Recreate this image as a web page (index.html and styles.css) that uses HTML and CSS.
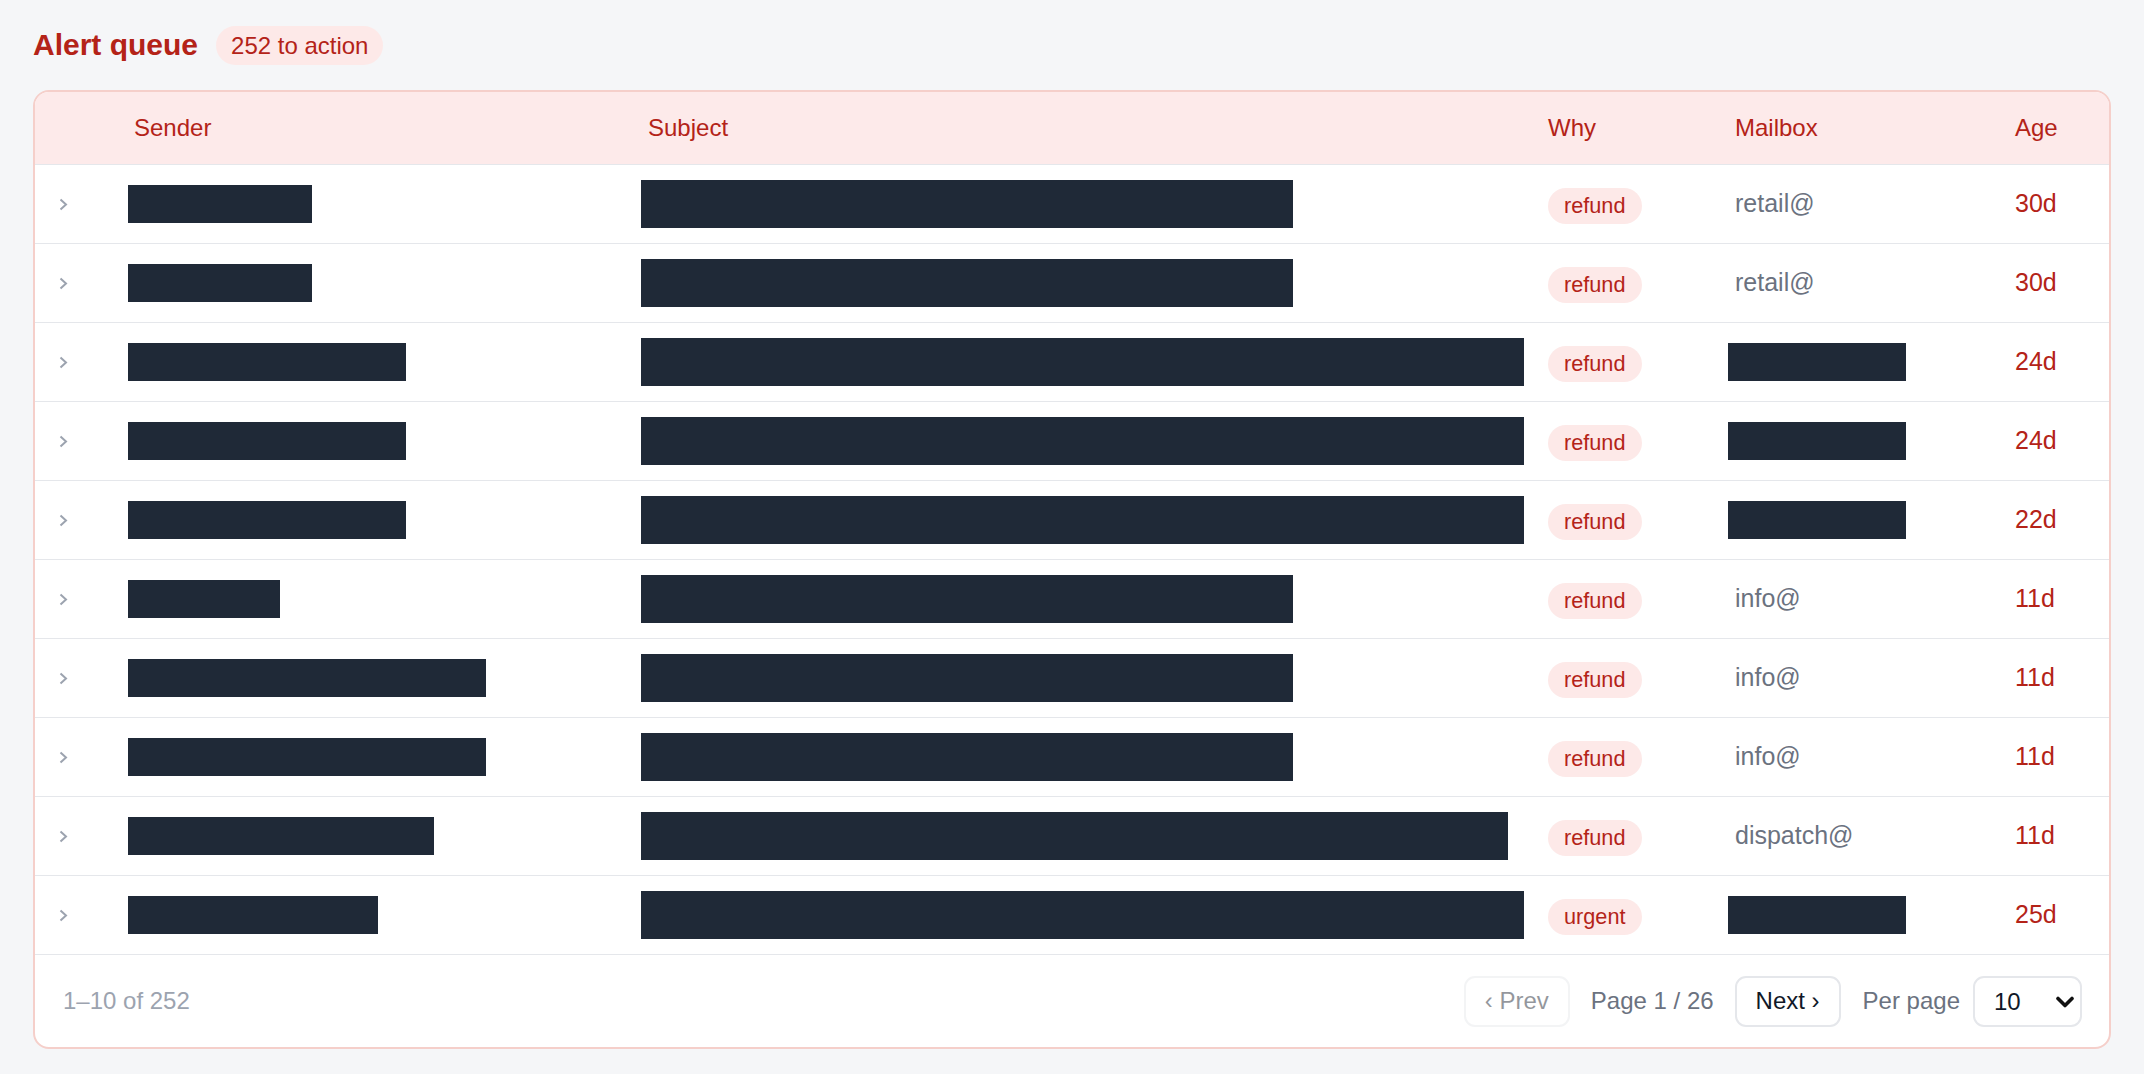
FILE: index.html
```html
<!DOCTYPE html>
<html lang="en">
<head>
<meta charset="utf-8">
<title>Alert queue</title>
<link rel="stylesheet" href="styles.css">
</head>
<body>
<div class="page">
  <div class="titlebar">
    <h1 class="title">Alert queue</h1>
    <span class="count-badge">252 to action</span>
  </div>

  <div class="card">
    <div class="row head">
      <div class="cell"></div>
      <div class="cell">Sender</div>
      <div class="cell">Subject</div>
      <div class="cell">Why</div>
      <div class="cell">Mailbox</div>
      <div class="cell">Age</div>
    </div>

    <div class="row">
      <div class="cell chev"><svg width="9" height="13" viewBox="0 0 9 13"><polyline points="1.5,1.5 7,6.5 1.5,11.5" fill="none" stroke="#9ca3af" stroke-width="2"/></svg></div>
      <div class="cell"><span class="bar bar-s" style="width:184px"></span></div>
      <div class="cell"><span class="bar bar-l" style="width:652px"></span></div>
      <div class="cell"><span class="pill">refund</span></div>
      <div class="cell mailbox">retail@</div>
      <div class="cell age">30d</div>
    </div>

    <div class="row">
      <div class="cell chev"><svg width="9" height="13" viewBox="0 0 9 13"><polyline points="1.5,1.5 7,6.5 1.5,11.5" fill="none" stroke="#9ca3af" stroke-width="2"/></svg></div>
      <div class="cell"><span class="bar bar-s" style="width:184px"></span></div>
      <div class="cell"><span class="bar bar-l" style="width:652px"></span></div>
      <div class="cell"><span class="pill">refund</span></div>
      <div class="cell mailbox">retail@</div>
      <div class="cell age">30d</div>
    </div>

    <div class="row">
      <div class="cell chev"><svg width="9" height="13" viewBox="0 0 9 13"><polyline points="1.5,1.5 7,6.5 1.5,11.5" fill="none" stroke="#9ca3af" stroke-width="2"/></svg></div>
      <div class="cell"><span class="bar bar-s" style="width:278px"></span></div>
      <div class="cell"><span class="bar bar-l" style="width:883px"></span></div>
      <div class="cell"><span class="pill">refund</span></div>
      <div class="cell"><span class="bar bar-m" style="width:178px"></span></div>
      <div class="cell age">24d</div>
    </div>

    <div class="row">
      <div class="cell chev"><svg width="9" height="13" viewBox="0 0 9 13"><polyline points="1.5,1.5 7,6.5 1.5,11.5" fill="none" stroke="#9ca3af" stroke-width="2"/></svg></div>
      <div class="cell"><span class="bar bar-s" style="width:278px"></span></div>
      <div class="cell"><span class="bar bar-l" style="width:883px"></span></div>
      <div class="cell"><span class="pill">refund</span></div>
      <div class="cell"><span class="bar bar-m" style="width:178px"></span></div>
      <div class="cell age">24d</div>
    </div>

    <div class="row">
      <div class="cell chev"><svg width="9" height="13" viewBox="0 0 9 13"><polyline points="1.5,1.5 7,6.5 1.5,11.5" fill="none" stroke="#9ca3af" stroke-width="2"/></svg></div>
      <div class="cell"><span class="bar bar-s" style="width:278px"></span></div>
      <div class="cell"><span class="bar bar-l" style="width:883px"></span></div>
      <div class="cell"><span class="pill">refund</span></div>
      <div class="cell"><span class="bar bar-m" style="width:178px"></span></div>
      <div class="cell age">22d</div>
    </div>

    <div class="row">
      <div class="cell chev"><svg width="9" height="13" viewBox="0 0 9 13"><polyline points="1.5,1.5 7,6.5 1.5,11.5" fill="none" stroke="#9ca3af" stroke-width="2"/></svg></div>
      <div class="cell"><span class="bar bar-s" style="width:152px"></span></div>
      <div class="cell"><span class="bar bar-l" style="width:652px"></span></div>
      <div class="cell"><span class="pill">refund</span></div>
      <div class="cell mailbox">info@</div>
      <div class="cell age">11d</div>
    </div>

    <div class="row">
      <div class="cell chev"><svg width="9" height="13" viewBox="0 0 9 13"><polyline points="1.5,1.5 7,6.5 1.5,11.5" fill="none" stroke="#9ca3af" stroke-width="2"/></svg></div>
      <div class="cell"><span class="bar bar-s" style="width:358px"></span></div>
      <div class="cell"><span class="bar bar-l" style="width:652px"></span></div>
      <div class="cell"><span class="pill">refund</span></div>
      <div class="cell mailbox">info@</div>
      <div class="cell age">11d</div>
    </div>

    <div class="row">
      <div class="cell chev"><svg width="9" height="13" viewBox="0 0 9 13"><polyline points="1.5,1.5 7,6.5 1.5,11.5" fill="none" stroke="#9ca3af" stroke-width="2"/></svg></div>
      <div class="cell"><span class="bar bar-s" style="width:358px"></span></div>
      <div class="cell"><span class="bar bar-l" style="width:652px"></span></div>
      <div class="cell"><span class="pill">refund</span></div>
      <div class="cell mailbox">info@</div>
      <div class="cell age">11d</div>
    </div>

    <div class="row">
      <div class="cell chev"><svg width="9" height="13" viewBox="0 0 9 13"><polyline points="1.5,1.5 7,6.5 1.5,11.5" fill="none" stroke="#9ca3af" stroke-width="2"/></svg></div>
      <div class="cell"><span class="bar bar-s" style="width:306px"></span></div>
      <div class="cell"><span class="bar bar-l" style="width:867px"></span></div>
      <div class="cell"><span class="pill">refund</span></div>
      <div class="cell mailbox">dispatch@</div>
      <div class="cell age">11d</div>
    </div>

    <div class="row">
      <div class="cell chev"><svg width="9" height="13" viewBox="0 0 9 13"><polyline points="1.5,1.5 7,6.5 1.5,11.5" fill="none" stroke="#9ca3af" stroke-width="2"/></svg></div>
      <div class="cell"><span class="bar bar-s" style="width:250px"></span></div>
      <div class="cell"><span class="bar bar-l" style="width:883px"></span></div>
      <div class="cell"><span class="pill">urgent</span></div>
      <div class="cell"><span class="bar bar-m" style="width:178px"></span></div>
      <div class="cell age">25d</div>
    </div>

    <div class="footer">
      <span class="range">1–10 of 252</span>
      <div class="pager">
        <button class="btn btn-disabled" type="button">‹ Prev</button>
        <span class="pageinfo">Page 1 / 26</span>
        <button class="btn" type="button">Next ›</button>
        <label class="perpage">
          <span>Per page</span>
          <span class="select-wrap">
            <select class="perpage-select">
              <option selected>10</option>
              <option>25</option>
              <option>50</option>
            </select>
            <svg class="select-arrow" width="18" height="12" viewBox="0 0 18 12"><polyline points="2,2.5 9,9.5 16,2.5" fill="none" stroke="#111111" stroke-width="3.6" stroke-linecap="round" stroke-linejoin="round"/></svg>
          </span>
        </label>
      </div>
    </div>
  </div>
</div>
</body>
</html>
```

FILE: styles.css
```css
* { box-sizing: border-box; }

html, body {
  margin: 0;
  padding: 0;
  background: #f5f6f8;
}

body {
  font-family: "Liberation Sans", Arial, sans-serif;
  color: #111827;
}

.page {
  padding: 26px 33px 20px;
}

.titlebar {
  display: flex;
  align-items: center;
  gap: 18px;
  height: 39px;
  margin-bottom: 25px;
}

.title {
  margin: 0;
  font-size: 30px;
  font-weight: 700;
  color: #b42318;
  line-height: 1;
  position: relative;
  top: -1px;
}

.count-badge {
  display: inline-block;
  height: 39px;
  line-height: 39px;
  padding: 0 15px;
  border-radius: 20px;
  background: #fde9e8;
  color: #b42318;
  font-size: 24px;
}

.card {
  background: #ffffff;
  border: 2px solid #f5cfca;
  border-radius: 16px;
  overflow: hidden;
}

.row {
  display: grid;
  grid-template-columns: 99px 514px 900px 187px 280px 1fr;
  align-items: center;
  height: 79px;
  border-bottom: 1px solid #e5e7eb;
}

.row.head {
  height: 73px;
  background: #fdeaea;
  color: #b42318;
  font-size: 24px;
}

.cell {
  min-width: 0;
  white-space: nowrap;
}

.chev {
  padding-left: 24px;
  display: flex;
  align-items: center;
}

.chev svg { display: block; }

.bar {
  display: block;
  background: #1f2937;
}

.bar-s {
  height: 38px;
  margin-left: -6px;
}

.bar-l {
  height: 48px;
  margin-left: -7px;
}

.bar-m {
  height: 38px;
  margin-left: -7px;
}

.pill {
  display: inline-block;
  height: 36px;
  line-height: 36px;
  padding: 0 16px;
  margin-top: 4px;
  border-radius: 18px;
  background: #fde9e8;
  color: #b42318;
  font-size: 21.7px;
}

.mailbox {
  font-size: 25px;
  color: #6b7280;
  margin-top: -2px;
}

.age {
  font-size: 25px;
  color: #b42318;
  margin-top: -2px;
}

.footer {
  display: flex;
  align-items: center;
  justify-content: space-between;
  height: 92px;
  padding: 0 27px 0 28px;
}

.range {
  font-size: 24px;
  color: #9ca3af;
}

.pager {
  display: flex;
  align-items: center;
  gap: 21px;
}

.btn {
  height: 51px;
  width: 106px;
  padding: 0;
  border: 2px solid #e5e7eb;
  border-radius: 11px;
  background: #ffffff;
  color: #111827;
  font-family: "Liberation Sans", Arial, sans-serif;
  font-size: 24px;
}

.btn-disabled {
  opacity: 0.45;
}

.pageinfo {
  font-size: 24px;
  color: #6b7280;
}

.perpage {
  display: flex;
  align-items: center;
  gap: 13px;
  font-size: 24px;
  color: #6b7280;
  margin-left: 1px;
}

.select-wrap {
  position: relative;
  display: block;
}

.perpage-select {
  display: block;
  -webkit-appearance: none;
  appearance: none;
  height: 51px;
  width: 109px;
  padding: 0 30px 0 19px;
  border: 2px solid #e5e7eb;
  border-radius: 11px;
  background: #ffffff;
  color: #111827;
  font-family: "Liberation Sans", Arial, sans-serif;
  font-size: 24px;
}

.select-arrow {
  position: absolute;
  right: 8px;
  top: 20px;
  pointer-events: none;
}
```
